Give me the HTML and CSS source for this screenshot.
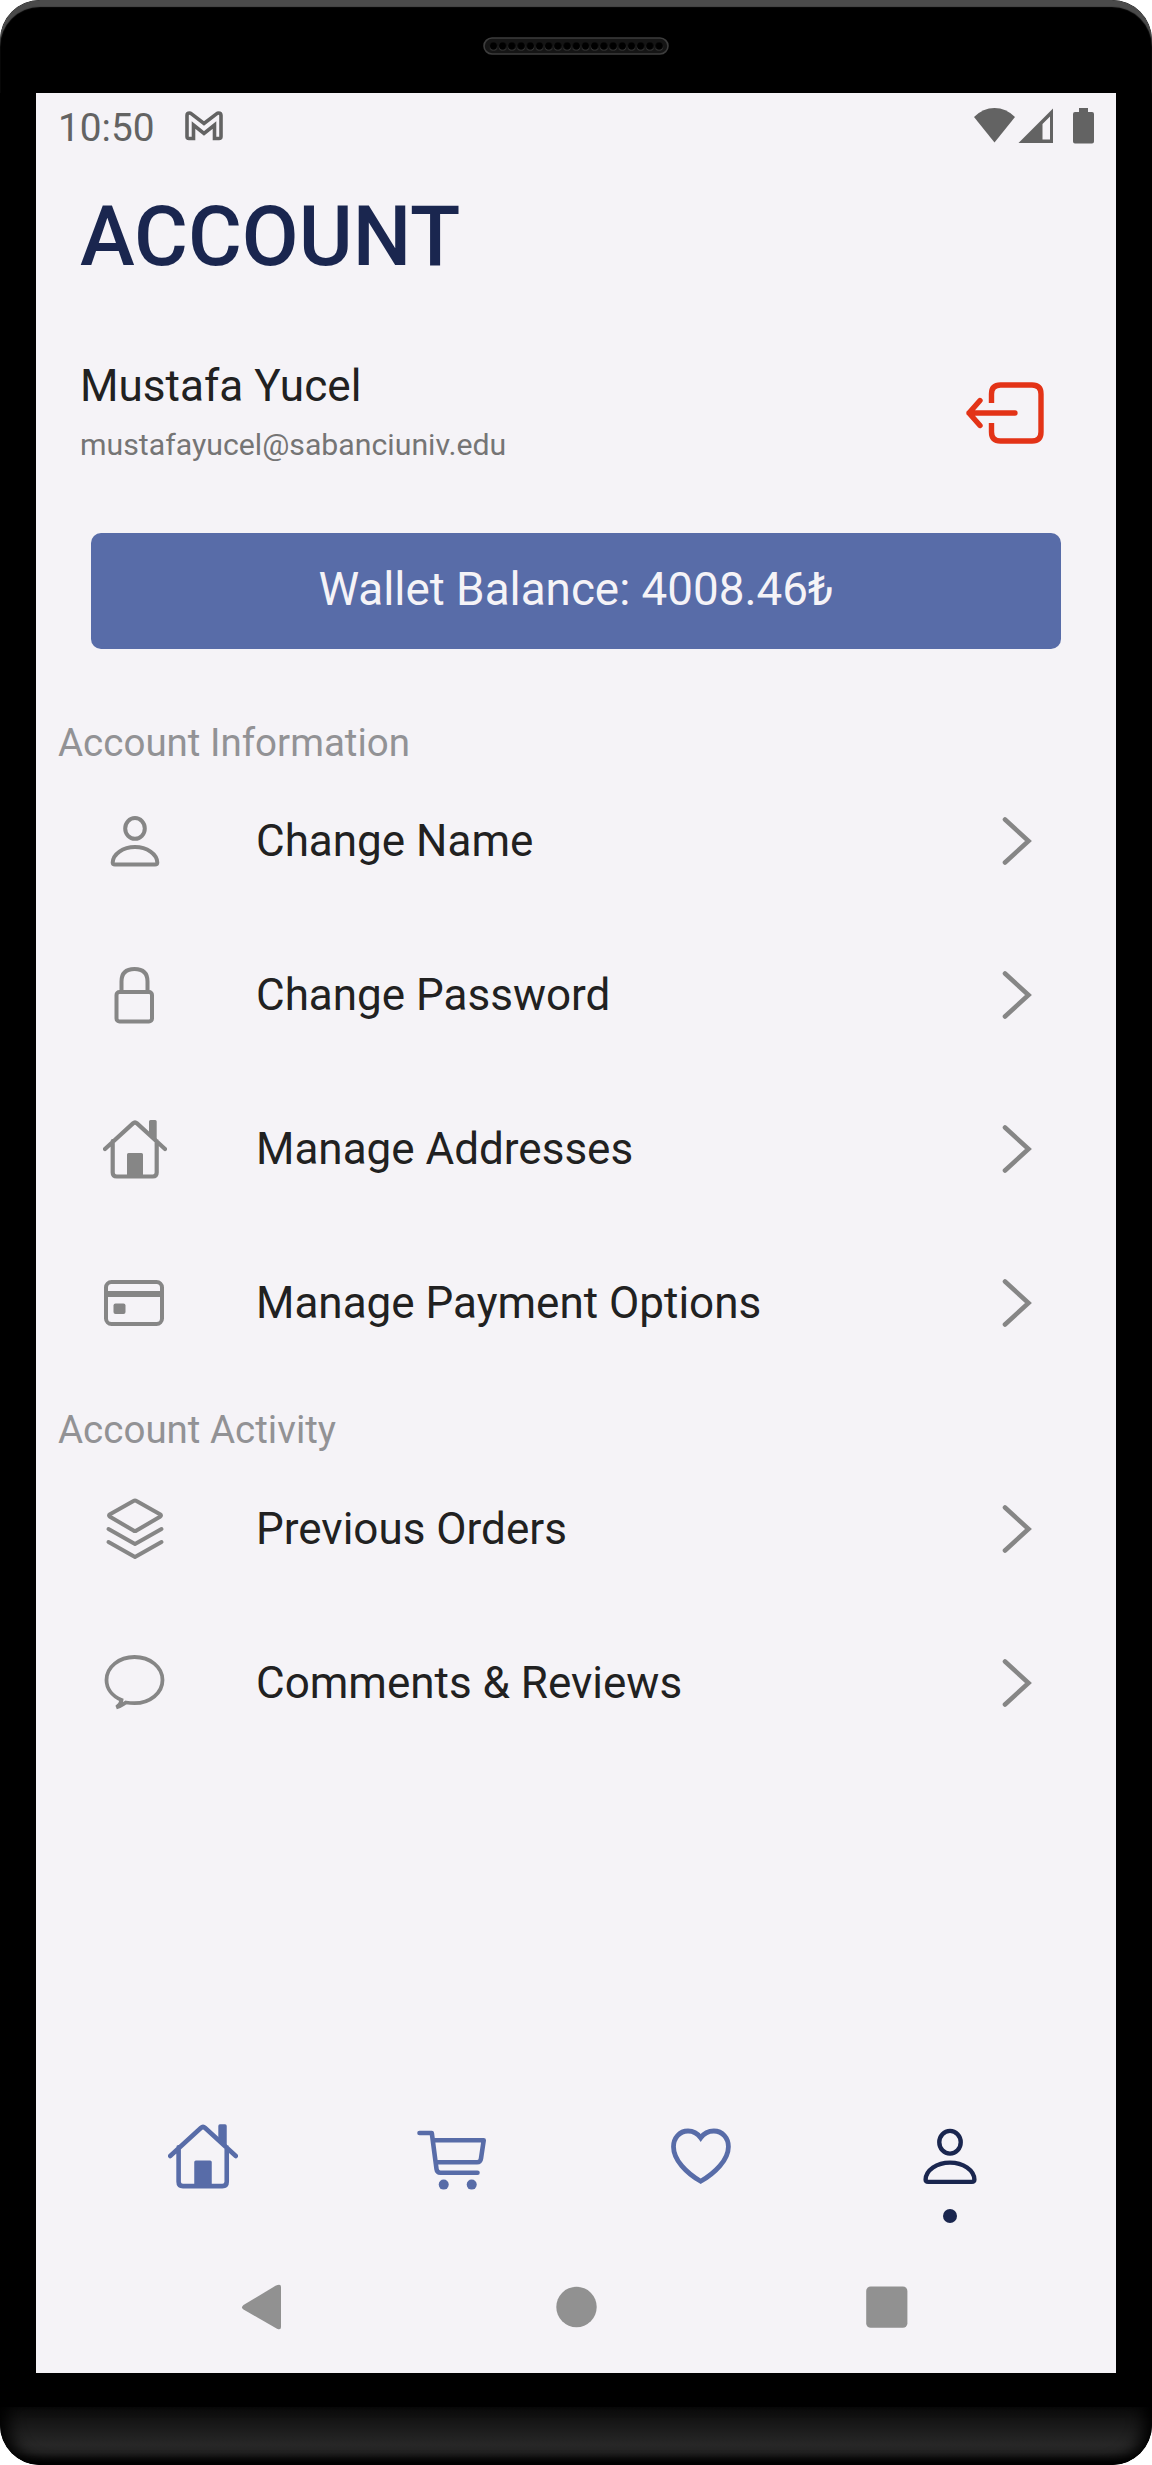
FILE: index.html
```html
<!DOCTYPE html>
<html lang="en">
<head>
<meta charset="utf-8">
<title>Account</title>
<link rel="stylesheet" href="styles.css">
</head>
<body>
<svg class="sprite" aria-hidden="true">
  <symbol id="house" viewBox="0 0 64 64">
    <path d="M2 32 30 6.4q2-1.8 4 0L62 32M9.7 24v31.500q0 4 4 4h36q4 0 4-4V24" fill="none" stroke="currentColor" stroke-width="4.2" stroke-linecap="round"/>
    <path d="M46 16.500V4.500q0-1.500 1.500-1.500h4.700q1.500 0 1.500 1.500V24zM24 59V37.500q0-1.500 1.500-1.500h13q1.500 0 1.500 1.500V59z" fill="currentColor"/>
  </symbol>
  <symbol id="person" viewBox="0 0 64 64">
    <g fill="none" stroke="currentColor" stroke-width="4">
      <ellipse cx="32" cy="19.400" rx="9.800" ry="10.400"/>
      <path d="M9.700 53.500C10 45 20 38 32 38s22 7 22.300 15.500q0 2.100-2.300 2.100H12q-2.300 0-2.300-2.100z"/>
    </g>
  </symbol>
  <symbol id="chevron" viewBox="0 0 32 52">
    <path d="M4 4.500 27.500 26 4 47.500" fill="none" stroke="currentColor" stroke-width="4.600" stroke-linecap="round"/>
  </symbol>
</svg>

<div class="phone">
  <div class="bezel-top">
    <svg class="speaker" viewBox="0 0 186 18">
      <defs>
        <pattern id="holes" x="5.900" y="0" width="9.200" height="18" patternUnits="userSpaceOnUse">
          <circle cx="4.600" cy="9.700" r="3.900" fill="#3a3a3a"/>
          <circle cx="4.600" cy="9" r="3.700" fill="#000"/>
        </pattern>
      </defs>
      <rect x="1" y="1" width="184" height="16" rx="8" fill="#151515" stroke="#3d3d3d" stroke-width="1.600"/>
      <rect x="5.900" y="0" width="174.800" height="18" fill="url(#holes)"/>
    </svg>
  </div>

  <main class="screen">
    <div class="status">
      <span class="clock">10:50</span>
      <svg class="gmail" viewBox="0 0 38 30">
        <path d="M6.500 27.500H4q-2 0-2-2V4.500Q2 2 4.500 2q1 0 2 .8L19 12.500 31.500 2.800q1-.8 2-.8Q36 2 36 4.500v21q0 2-2 2h-4.500V14L19 22.500 8.500 14v13.500z" fill="none" stroke="#636363" stroke-width="3.600"/>
      </svg>
      <svg class="signals" viewBox="0 0 122 38">
        <g fill="#636363">
          <path d="M0 10Q9 1 20.500 1T41 10L20.500 35.500z"/>
          <path fill-rule="evenodd" d="M44.500 36 79 1.500V36zM68.500 17v15.500h7.500V9.500z"/>
          <path d="M105 1h9v4h4q2 0 2 2v27.500q0 2-2 2h-17q-2 0-2-2V7q0-2 2-2h4z"/>
        </g>
      </svg>
    </div>

    <h1 class="title">ACCOUNT</h1>

    <section class="profile">
      <div>
        <p class="name">Mustafa Yucel</p>
        <p class="email">mustafayucel@sabanciuniv.edu</p>
      </div>
      <svg class="logout" viewBox="0 0 80 64">
        <g fill="none" stroke="#e33317" stroke-width="5.400">
          <path d="M27.500 22V13q0-9 9-9h31.500q9 0 9 9v38q0 9-9 9H36.500q-9 0-9-9V42"/>
          <path d="M16 19.500 5 32l11 12.500M5 32h46" stroke-linecap="round" stroke-linejoin="round"/>
        </g>
      </svg>
    </section>

    <div class="wallet">Wallet Balance: 4008.46₺</div>

    <h2 class="group">Account Information</h2>
    <ul class="rows">
      <li class="row"><svg class="icon"><use href="#person"/></svg><span class="label">Change Name</span><svg class="go"><use href="#chevron"/></svg></li>
      <li class="row">
        <svg class="icon" viewBox="0 0 64 64"><g fill="none" stroke="currentColor" stroke-width="4"><rect x="13.500" y="29" width="35.500" height="29.500" rx="3"/><path d="M18.500 28V18.500C18.500 9 24 6 31.500 6s13 3 13 12.500V28"/></g></svg>
        <span class="label">Change Password</span><svg class="go"><use href="#chevron"/></svg></li>
      <li class="row"><svg class="icon"><use href="#house"/></svg><span class="label">Manage Addresses</span><svg class="go"><use href="#chevron"/></svg></li>
      <li class="row">
        <svg class="icon" viewBox="0 0 64 64"><rect x="3" y="11" width="56" height="42" rx="5.500" fill="none" stroke="currentColor" stroke-width="4"/><path d="M3 20h57v6H3z" fill="currentColor"/><rect x="10.500" y="32.500" width="12" height="10.500" rx="2" fill="currentColor"/></svg>
        <span class="label">Manage Payment Options</span><svg class="go"><use href="#chevron"/></svg></li>
    </ul>

    <h2 class="group">Account Activity</h2>
    <ul class="rows activity">
      <li class="row">
        <svg class="icon" viewBox="0 0 64 64"><g fill="none" stroke="currentColor" stroke-width="4" stroke-linejoin="round" stroke-linecap="round"><path d="M30.500 4q1.500-1 3 0L57 17.200q2 1.300 0 2.600L33.500 33.500q-1.500 1-3 0L7 19.800q-2-1.300 0-2.600z"/><path d="M5.500 32 32 47l26.500-15M5.500 45 32 60l26.500-15"/></g></svg>
        <span class="label">Previous Orders</span><svg class="go"><use href="#chevron"/></svg></li>
      <li class="row">
        <svg class="icon" viewBox="0 0 64 64"><path d="M18.500 49C9 45 3.500 37.500 3.500 29 3.500 16 16 6 31.500 6s28 10 28 23-12.500 23.200-28 23.200q-4.500 0-8.500-.7c-3 1.500-5 4-9.500 4.800 3-2 4.500-4 5-7.300z" fill="none" stroke="currentColor" stroke-width="3.800"/></svg>
        <span class="label">Comments &amp; Reviews</span><svg class="go"><use href="#chevron"/></svg></li>
    </ul>

    <nav class="tabs">
      <div class="tab"><svg class="tab-icon"><use href="#house"/></svg></div>
      <div class="tab">
        <svg class="tab-icon" viewBox="0 0 70 70"><g fill="none" stroke="currentColor" stroke-width="4.600" stroke-linecap="round" stroke-linejoin="round"><path d="M2.500 12h12.300L19.500 48q.5 3.800 4 3.800h37M16.500 19.300h50.200L64 37.500q-.5 3.800-4 3.800H19.500"/></g><circle cx="26.700" cy="63.600" r="5" fill="currentColor"/><circle cx="54.700" cy="63.600" r="5" fill="currentColor"/></svg>
      </div>
      <div class="tab">
        <svg class="tab-icon" viewBox="0 0 70 70"><path d="M34.700 16.800C31 11.700 27 10 22 10 13.500 10 7.500 17 7.500 25.700c0 13.300 13 26.300 27.200 34.600 14.200-8.300 27.700-21.300 27.700-34.600C62.400 17 56.500 10 47.800 10c-5 0-9.400 1.700-13.100 6.800z" fill="none" stroke="currentColor" stroke-width="4.800"/></svg>
      </div>
      <div class="tab active"><svg class="tab-icon"><use href="#person"/></svg><i class="dot"></i></div>
    </nav>

    <div class="system">
      <svg viewBox="0 0 46 46"><path d="M36.500 1.800Q42 -1 42 3v40q0 3.500-4 1.800L4.500 25.500q-3-2 0-4.500z" fill="currentColor"/></svg>
      <svg viewBox="0 0 46 46"><circle cx="24.500" cy="23" r="20.200" fill="currentColor"/></svg>
      <svg viewBox="0 0 46 46"><rect x="2.200" y="2.500" width="41.200" height="41.200" rx="4.500" fill="currentColor"/></svg>
    </div>
  </main>

  <div class="chin"></div>
</div>
</body>
</html>
```
FILE: styles.css
```css
* { box-sizing: border-box; }
body { margin: 0; background: #fff; font-family: Roboto, "Liberation Sans", sans-serif; }
h1, h2, p, ul { margin: 0; padding: 0; font-weight: 400; }
ul { list-style: none; }
svg { display: block; flex: none; }
.sprite { display: none; }

.phone {
  width: 1152px;
  height: 2465px;
  background: #000;
  border-radius: 40px;
  overflow: hidden;
  display: flex;
  flex-direction: column;
}
.bezel-top {
  height: 93px;
  border-radius: 40px 40px 0 0;
  box-shadow: inset 0 7px 1px #4a4a4a;
  padding: 37px 0 0 483px;
}
.speaker { width: 186px; height: 18px; }

.screen {
  margin: 0 36px;
  height: 2280px;
  background: #f5f3f7;
  display: flex;
  flex-direction: column;
}

.status {
  height: 64px;
  padding: 0 20px 0 22px;
  display: flex;
  align-items: center;
}
.clock { font-size: 38.800px; color: #636363; width: 127px; padding-top: 5px; }
.gmail { width: 38px; height: 30px; margin-top: 1px; }
.signals { width: 122px; height: 38px; margin: 2px 0 0 auto; }

.title {
  height: 174px;
  padding: 31px 0 0 44px;
  font-size: 82.500px;
  font-weight: 500;
  line-height: 98px;
  color: #1a264f;
}

.profile {
  height: 202px;
  padding: 29px 72px 0 44px;
  display: flex;
  justify-content: space-between;
}
.name { font-size: 44.100px; line-height: 52px; color: #212121; }
.email { font-size: 30.250px; line-height: 36px; margin-top: 15px; color: #757575; }
.logout { width: 80px; height: 64px; margin-top: 21px; }

.wallet {
  height: 115.500px;
  margin: 0 55px 44.500px;
  border-radius: 10px;
  background: #586ca8;
  color: #f5f3f7;
  font-size: 45.800px;
  line-height: 113px;
  text-align: center;
}

.group {
  height: 71px;
  padding: 27px 0 0 22px;
  font-size: 38.500px;
  line-height: 45px;
  color: #929295;
}

.row {
  height: 154px;
  padding: 0 83px 0 67px;
  display: flex;
  align-items: center;
  color: #868686;
}
.activity { padding-top: 1px; }
.icon { width: 64px; height: 64px; }
.label { flex: 1; margin-left: 89px; font-size: 44px; color: #212121; white-space: nowrap; }
.go { width: 32px; height: 52px; }

.tabs {
  margin: auto 42px 0 43px;
  display: grid;
  grid-template-columns: repeat(4, 1fr);
  height: 143px;
  color: #586ca8;
}
.tab { display: flex; flex-direction: column; align-items: center; }
.tab-icon { width: 70px; height: 70px; }
.active { color: #1a264f; }
.dot { width: 14px; height: 14px; border-radius: 50%; background: currentColor; margin-top: 18px; }

.system {
  height: 109px;
  padding: 20px 206px 0 203px;
  display: flex;
  justify-content: space-between;
  color: #919191;
}
.system svg { width: 46px; height: 46px; }

.chin {
  height: 58px;
  margin-top: 34px;
  border-radius: 0 0 40px 40px;
  background: linear-gradient(#0b0b0b, #272727 65%, #222 78%, #000 97%);
  box-shadow: inset 14px -2px 16px -6px #000, inset -14px -2px 16px -6px #000;
}
```
